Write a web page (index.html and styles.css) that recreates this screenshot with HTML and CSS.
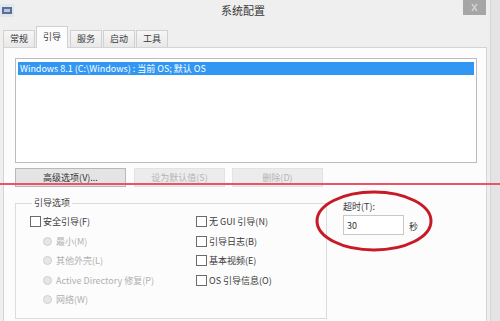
FILE: index.html
```html
<!DOCTYPE html>
<html lang="zh-CN">

<head>
    <meta charset="UTF-8">
    <meta name="viewport" content="width=device-width, initial-scale=1.0">
    <title>系统配置</title>
    <link rel="stylesheet" href="styles.css">
</head>
<body>
    <div class="window">
        <!-- 标题栏 -->
        <div class="titlebar">
            <svg class="app-icon" width="14" height="13" viewBox="0 0 14 13">
                <rect x="0" y="0" width="14" height="13" fill="#dfe6ee"/>
                <rect x="2" y="3" width="10" height="7" fill="#5a6f93"/>
                <rect x="4" y="5" width="6" height="3" fill="#b7c6e0"/>
            </svg>
            <div class="title">系统配置</div>
            <div class="close-btn">
                <svg width="23" height="15" viewBox="0 0 23 15">
                    <path d="M9 4 L14 11 M14 4 L9 11" stroke="#cfcfcf" stroke-width="1.6"/>
                </svg>
            </div>
        </div>

        <!-- 标签页 -->
        <div class="tabs">
            <div class="tab">常规</div>
            <div class="tab active">引导</div>
            <div class="tab">服务</div>
            <div class="tab">启动</div>
            <div class="tab">工具</div>
        </div>

        <div class="panel">
            <div class="os-list">
                <div class="os-item selected">Windows 8.1 (C:\Windows) : 当前 OS; 默认 OS</div>
            </div>

            <div class="button-row">
                <button class="btn btn-adv">高级选项(V)...</button>
                <button class="btn btn-default" disabled>设为默认值(S)</button>
                <button class="btn btn-del" disabled>删除(D)</button>
            </div>

            <div class="options">
                <fieldset class="boot-options">
                    <legend>引导选项</legend>
                    <div class="opt-cols">
                        <div class="opt-col left">
                            <div class="opt"><span class="check"></span>安全引导(F)</div>
                            <div class="opt sub disabled"><span class="radio"></span>最小(M)</div>
                            <div class="opt sub disabled"><span class="radio"></span>其他外壳(L)</div>
                            <div class="opt sub disabled"><span class="radio"></span>Active Directory 修复(P)</div>
                            <div class="opt sub disabled"><span class="radio"></span>网络(W)</div>
                        </div>
                        <div class="opt-col">
                            <div class="opt"><span class="check"></span>无 GUI 引导(N)</div>
                            <div class="opt"><span class="check"></span>引导日志(B)</div>
                            <div class="opt"><span class="check"></span>基本视频(E)</div>
                            <div class="opt"><span class="check"></span>OS 引导信息(O)</div>
                        </div>
                    </div>
                </fieldset>

                <div class="timeout">
                    <div class="timeout-label">超时(T):</div>
                    <div class="timeout-row">
                        <input type="text" class="timeout-input" value="30">
                        <span class="unit">秒</span>
                    </div>
                </div>
            </div>
        </div>
    </div>

    <!-- 标注 -->
    <div class="mark-line"></div>
    <svg class="mark-ellipse" width="120" height="64" viewBox="0 0 120 64">
        <ellipse cx="60" cy="32" rx="57" ry="29" fill="none" stroke="#c81a26" stroke-width="3"/>
    </svg>
</body>
</html>
```

FILE: styles.css
```css
    /* 公共样式 */
    body {
        margin: 0;
        width: 500px;
        height: 321px;
        overflow: hidden;
        position: relative;
        background: #e4e4e4;
        font-family: "Noto Sans CJK SC", "Noto Sans", sans-serif;
        font-size: 9px;
        color: #3a3a3a;
    }

    .window {
        width: 490px;
        height: 321px;
        background: #efefef;
        border-right: 1px solid #d6d6d6;
    }

    /* 标题栏 */
    .titlebar {
        display: flex;
        align-items: flex-start;
        height: 26px;
    }

    .app-icon {
        margin-top: 4px;
        flex: none;
    }

    .title {
        flex: 1;
        text-align: center;
        font-size: 11px;
        line-height: 11px;
        margin-top: 5px;
        padding-left: 9px;
        color: #3a3a3a;
    }

    .close-btn {
        width: 23px;
        height: 15px;
        margin-right: 4px;
        background: #a6a6a6;
    }

    .close-btn svg {
        display: block;
    }

    /* 标签页 */
    .tabs {
        display: flex;
        align-items: flex-end;
        padding-left: 3px;
        height: 21px;
    }

    .tab {
        height: 16px;
        line-height: 16px;
        padding: 0 6px;
        margin-right: 1px;
        border: 1px solid #d0d0d0;
        border-bottom: none;
        background: linear-gradient(#f6f6f6, #e8e8e8);
    }

    .tab.active {
        height: 21px;
        line-height: 19px;
        margin: 0 2px -1px 0;
        background: #fcfcfc;
        position: relative;
        z-index: 1;
    }

    /* 面板 */
    .panel {
        margin-left: 3px;
        width: 484px;
        height: 280px;
        background: #fcfcfc;
        border: 1px solid #d4d4d4;
        box-sizing: border-box;
        padding: 10px 0 0 11px;
    }

    .os-list {
        width: 462px;
        height: 105px;
        box-sizing: border-box;
        background: #fff;
        border: 1px solid #bcbcbc;
        padding: 3px 2px;
    }

    .os-item {
        height: 13px;
        line-height: 13px;
        padding-left: 2px;
        white-space: nowrap;
    }

    .os-item.selected {
        background: #3297f2;
        color: #fff;
    }

    .button-row {
        display: flex;
        margin-top: 5px;
    }

    .btn {
        height: 19px;
        padding: 0;
        font-family: inherit;
        font-size: 9px;
        color: #333;
        background: #e4e4e4;
        border: 1px solid #b8b8b8;
        margin-right: 8px;
    }

    .btn:disabled {
        color: #b4b4b4;
        background: #ececec;
        border-color: #e2e2e2;
    }

    .btn-adv { width: 111px; }
    .btn-default { width: 91px; }
    .btn-del { width: 91px; margin-left: -1px; }

    /* 引导选项 */
    .options {
        display: flex;
        margin-top: 10px;
    }

    .boot-options {
        margin: 0;
        width: 312px;
        height: 122px;
        box-sizing: border-box;
        border: 1px solid #dcdcdc;
        padding: 3px 0 0 14px;
    }

    .boot-options legend {
        padding: 0 2px;
        margin-left: 2px;
        line-height: 12px;
    }

    .opt-cols {
        display: flex;
    }

    .opt-col.left {
        width: 166px;
    }

    .opt {
        display: flex;
        align-items: center;
        height: 19.5px;
        white-space: nowrap;
    }

    .opt.sub {
        padding-left: 13px;
    }

    .opt.disabled {
        color: #b0b0b0;
    }

    .check {
        width: 9px;
        height: 9px;
        border: 1px solid #6a6a6a;
        background: #fff;
        margin-right: 2px;
        flex: none;
    }

    .radio {
        width: 7px;
        height: 7px;
        border: 1px solid #d0d0d0;
        border-radius: 50%;
        background: #e6e6e6;
        margin-right: 4px;
        flex: none;
    }

    /* 超时 */
    .timeout {
        margin-left: 16px;
        padding-top: 4px;
    }

    .timeout-label {
        line-height: 12px;
    }

    .timeout-row {
        display: flex;
        align-items: center;
        margin-top: 2px;
    }

    .timeout-input {
        width: 61px;
        height: 20px;
        box-sizing: border-box;
        border: 1px solid #c8c8c8;
        padding: 0 3px;
        font-family: inherit;
        font-size: 9px;
        color: #333;
        outline: none;
    }

    .unit {
        margin-left: 5px;
        margin-top: 2px;
    }

    /* 标注 */
    .mark-line {
        position: absolute;
        left: 0;
        top: 183px;
        width: 500px;
        height: 2px;
        background: #ee5267;
    }

    .mark-ellipse {
        position: absolute;
        left: 314px;
        top: 189px;
    }
```
